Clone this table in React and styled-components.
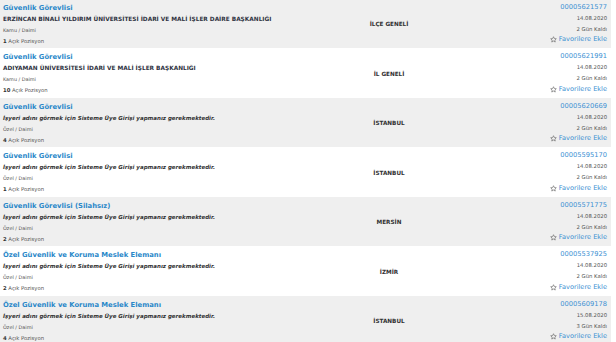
import React from 'react';
import styled, { createGlobalStyle } from 'styled-components';

const GlobalStyle = createGlobalStyle`
  html, body {
    margin: 0;
    padding: 0;
    background: #ffffff;
    font-family: "DejaVu Sans", Verdana, sans-serif;
    overflow: hidden;
  }
`;

const List = styled.div`
  width: 611px;
  margin-top: -1.5px;
`;

const Row = styled.div`
  display: grid;
  grid-template-columns: 331px 110px 1fr;
  align-items: center;
  height: 49.5px;
  box-sizing: border-box;
  padding: 3px 4px 1.5px 3px;
  background: ${props => (props.$shaded ? '#efefef' : '#ffffff')};
`;

const Info = styled.div`
  display: flex;
  flex-direction: column;
  align-self: start;
  white-space: nowrap;
`;

const Title = styled.a`
  font-size: 6.8px;
  line-height: 12px;
  font-weight: bold;
  color: #2a88c9;
  text-decoration: none;
`;

const Employer = styled.div`
  font-size: ${props => (props.$hidden ? '5.5px' : '5.8px')};
  line-height: 11px;
  font-weight: bold;
  font-style: ${props => (props.$hidden ? 'italic' : 'normal')};
  color: ${props => (props.$hidden ? '#333333' : '#2f3342')};
`;

const Meta = styled.div`
  font-size: ${props => props.$size || '4.9px'};
  line-height: 11px;
  color: #555555;

  b {
    color: #333333;
  }
`;

const City = styled.div`
  text-align: center;
  font-size: 5.7px;
  font-weight: bold;
  color: #333333;
  white-space: nowrap;
`;

const Side = styled.div`
  display: flex;
  flex-direction: column;
  align-items: flex-end;
  align-self: start;
  white-space: nowrap;
`;

const AdNo = styled.a`
  font-size: 6.7px;
  line-height: 11px;
  color: #3b90d3;
  text-decoration: none;
`;

const Small = styled.div`
  font-size: 5.3px;
  line-height: ${props => props.$lh || '11px'};
  color: #555555;
`;

const Fav = styled.a`
  display: flex;
  align-items: center;
  gap: 2px;
  font-size: 6.6px;
  line-height: 11px;
  color: #3a8fd2;
  text-decoration: none;
`;

const Star = () => (
  <svg width="7" height="7" viewBox="0 0 24 24" fill="none" stroke="#666" strokeWidth="2.2" strokeLinejoin="round">
    <path d="M12 2.5l2.9 6.2 6.7.7-5 4.6 1.4 6.7L12 17.3l-6 3.4 1.4-6.7-5-4.6 6.7-.7z" />
  </svg>
);

const hiddenText = 'İşyeri adını görmek için Sisteme Üye Girişi yapmanız gerekmektedir.';

const jobs = [
  { title: 'Güvenlik Görevlisi', employer: 'ERZİNCAN BİNALİ YILDIRIM ÜNİVERSİTESİ İDARİ VE MALİ İŞLER DAİRE BAŞKANLIĞI', type: 'Kamu / Daimi', count: 1, city: 'İLÇE GENELİ', no: '00005621577', date: '14.08.2020', left: 2 },
  { title: 'Güvenlik Görevlisi', employer: 'ADIYAMAN ÜNİVERSİTESİ İDARİ VE MALİ İŞLER BAŞKANLIĞI', type: 'Kamu / Daimi', count: 10, city: 'İL GENELİ', no: '00005621991', date: '14.08.2020', left: 2 },
  { title: 'Güvenlik Görevlisi', employer: null, type: 'Özel / Daimi', count: 4, city: 'İSTANBUL', no: '00005620669', date: '14.08.2020', left: 2 },
  { title: 'Güvenlik Görevlisi', employer: null, type: 'Özel / Daimi', count: 1, city: 'İSTANBUL', no: '00005595170', date: '14.08.2020', left: 2 },
  { title: 'Güvenlik Görevlisi (Silahsız)', employer: null, type: 'Özel / Daimi', count: 2, city: 'MERSİN', no: '00005571775', date: '14.08.2020', left: 2 },
  { title: 'Özel Güvenlik ve Koruma Meslek Elemanı', employer: null, type: 'Özel / Daimi', count: 2, city: 'İZMİR', no: '00005537925', date: '14.08.2020', left: 2 },
  { title: 'Özel Güvenlik ve Koruma Meslek Elemanı', employer: null, type: 'Özel / Daimi', count: 4, city: 'İSTANBUL', no: '00005609178', date: '15.08.2020', left: 3 },
];

const App = () => (
  <>
    <GlobalStyle />
    <List>
      {jobs.map((job, i) => (
        <Row key={job.no} $shaded={i % 2 === 0}>
          <Info>
            <Title href="#">{job.title}</Title>
            {job.employer
              ? <Employer>{job.employer}</Employer>
              : <Employer $hidden>{hiddenText}</Employer>}
            <Meta>{job.type}</Meta>
            <Meta $size="5.3px"><b>{job.count}</b> Açık Pozisyon</Meta>
          </Info>
          <City>{job.city}</City>
          <Side>
            <AdNo href="#">{job.no}</AdNo>
            <Small>{job.date}</Small>
            <Small $lh="10.5px">{job.left} Gün Kaldı</Small>
            <Fav href="#"><Star />Favorilere Ekle</Fav>
          </Side>
        </Row>
      ))}
    </List>
  </>
);

export default App;
